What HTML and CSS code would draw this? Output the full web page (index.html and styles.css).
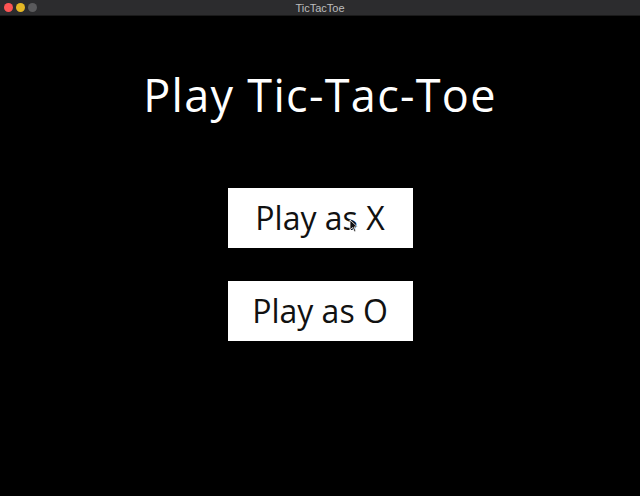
FILE: index.html
```html
<!DOCTYPE html>
<html lang="en">
<head>
    <meta charset="UTF-8">
    <meta name="viewport" content="width=device-width, initial-scale=1.0">
    <title>TicTacToe</title>
    <link rel="stylesheet" href="styles.css">
</head>
<body>
    <div class="titlebar">
        <div class="lights">
            <span class="light red"></span>
            <span class="light yellow"></span>
            <span class="light gray"></span>
        </div>
        <div class="window-title">TicTacToe</div>
    </div>
    <div class="container">
        <h1>Play Tic-Tac-Toe</h1>
        <button class="play-btn">Play as X</button>
        <button class="play-btn">Play as O</button>
    </div>
    <svg class="cursor" width="10" height="14" viewBox="0 0 10 14">
        <path d="M1 1 L1 11 L3.5 8.5 L5.5 13 L7 12.3 L5 8 L8.5 8 Z" fill="#111" stroke="#fff" stroke-width="0.8"/>
    </svg>
</body>
</html>
```

FILE: styles.css
```css
body {
    margin: 0;
    background: #000;
    font-family: "Open Sans", sans-serif;
    height: 496px;
    overflow: hidden;
    position: relative;
}
.titlebar {
    height: 15px;
    background: #2c2c2e;
    border-bottom: 1px solid #1a1a1a;
    display: flex;
    align-items: center;
    justify-content: center;
    position: relative;
}
.lights {
    position: absolute;
    left: 4px;
    top: 3px;
    display: flex;
    gap: 3px;
}
.light {
    width: 9px;
    height: 9px;
    border-radius: 50%;
}
.red { background: #fd5454; }
.yellow { background: #e5b825; }
.gray { background: #5a5a5c; }
.window-title {
    color: #bdbdbd;
    font-size: 11px;
    font-family: "Liberation Sans", sans-serif;
}
.container {
    display: flex;
    flex-direction: column;
    align-items: center;
}
h1 {
    color: #fff;
    font-weight: 400;
    font-size: 45px;
    letter-spacing: 1.3px;
    margin: 50px 0 63px;
    line-height: 1.3;
}
.play-btn {
    width: 185px;
    height: 60px;
    margin-bottom: 33px;
    background: #fff;
    border: none;
    font-family: "Open Sans", sans-serif;
    font-size: 32px;
    font-weight: 400;
    color: #111;
    padding: 0;
}
.cursor {
    position: absolute;
    left: 349px;
    top: 219px;
}
```
